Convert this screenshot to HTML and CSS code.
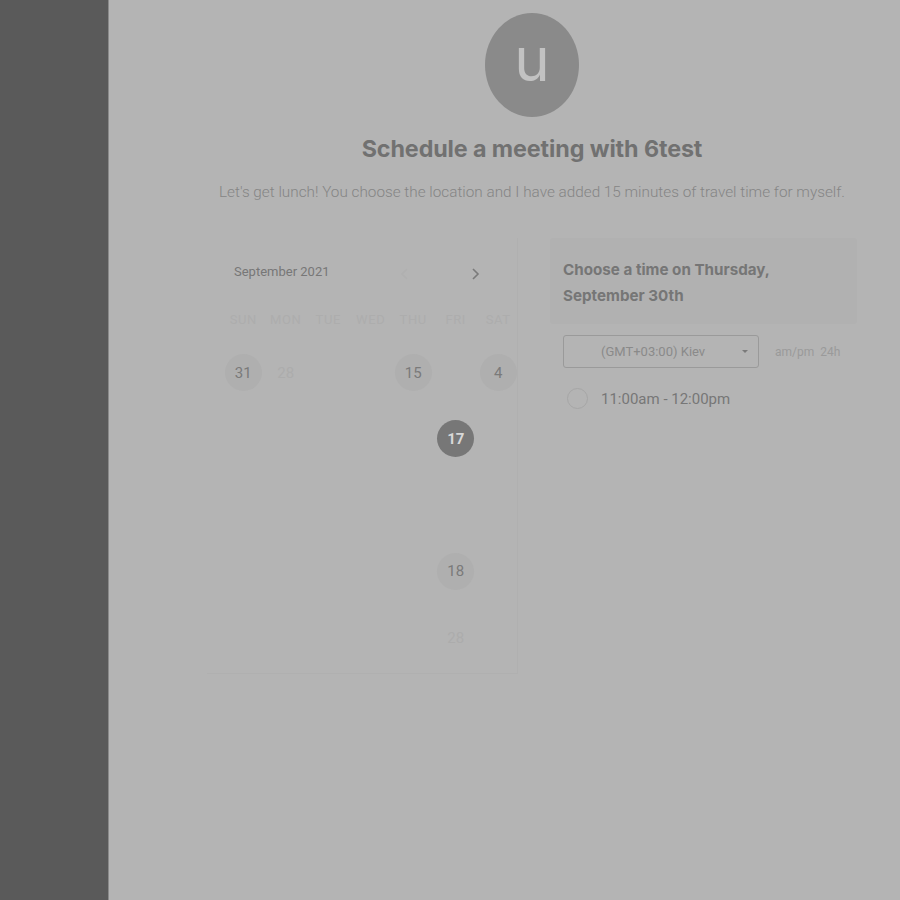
FILE: index.html
```html
<!DOCTYPE html>
<html>
<head>
<meta charset="utf-8">
<link rel="stylesheet" href="styles.css">
</head>
<body>
<div class="app">
  <aside class="sidebar"></aside>
  <main class="main">
    <div class="content">
      <div class="avatar"><span>u</span></div>
      <h1 class="title">Schedule a meeting with 6test</h1>
      <p class="desc">Let's get lunch! You choose the location and I have added 15 minutes of travel time for myself.</p>
      <div class="columns">
        <section class="calendar">
          <div class="cal-head">
            <span class="month">September 2021</span>
            <div class="nav">
              <svg class="arrow prev" width="10" height="14" viewBox="0 0 10 14"><path d="M7 2 L2 7 L7 12" fill="none" stroke="currentColor" stroke-width="1.6"/></svg>
              <svg class="arrow next" width="10" height="14" viewBox="0 0 10 14"><path d="M3 2 L8 7 L3 12" fill="none" stroke="currentColor" stroke-width="1.6"/></svg>
            </div>
          </div>
          <div class="weekdays">
            <span>SUN</span><span>MON</span><span>TUE</span><span>WED</span><span>THU</span><span>FRI</span><span>SAT</span>
          </div>
          <div class="grid">
            <span class="day avail">31</span><span class="day faint">28</span><span class="day"></span><span class="day"></span><span class="day avail">15</span><span class="day"></span><span class="day avail">4</span>
            <span class="day"></span><span class="day"></span><span class="day"></span><span class="day"></span><span class="day"></span><span class="day selected">17</span><span class="day"></span>
            <span class="day"></span><span class="day"></span><span class="day"></span><span class="day"></span><span class="day"></span><span class="day"></span><span class="day"></span>
            <span class="day"></span><span class="day"></span><span class="day"></span><span class="day"></span><span class="day"></span><span class="day avail">18</span><span class="day"></span>
            <span class="day"></span><span class="day"></span><span class="day"></span><span class="day"></span><span class="day"></span><span class="day faint">28</span><span class="day"></span>
          </div>
        </section>
        <section class="times">
          <div class="times-head">Choose a time on Thursday, September 30th</div>
          <div class="tz-row">
            <div class="select"><span>(GMT+03:00) Kiev</span><span class="caret"></span></div>
            <div class="fmt"><span>am/pm</span><span>24h</span></div>
          </div>
          <div class="slot"><span class="radio"></span><span>11:00am - 12:00pm</span></div>
        </section>
      </div>
    </div>
  </main>
</div>
</body>
</html>
```
FILE: styles.css
```css
html, body {
  margin: 0;
  padding: 0;
  height: 100%;
}
body {
  background: #b4b4b4;
  font-family: Roboto, "Liberation Sans", sans-serif;
}
.app {
  display: flex;
  height: 900px;
}
.sidebar {
  width: 108px;
  flex: none;
  background: #5a5a5a;
  border-right: 1px solid #8a8a8a;
}
.main {
  flex: 1;
  padding-left: 98px;
}
.content {
  width: 650px;
  display: flex;
  flex-direction: column;
  align-items: center;
  padding-top: 13px;
}
.avatar {
  width: 94px;
  height: 104px;
  border-radius: 50%;
  background: #8a8a8a;
  display: flex;
  align-items: center;
  justify-content: center;
}
.avatar span {
  color: #c2c2c2;
  font-family: Inter, Roboto, sans-serif;
  font-size: 60px;
  line-height: 1;
  margin-top: -12px;
}
.title {
  margin: 17px 0 0;
  font-family: Inter, "Liberation Sans", sans-serif;
  font-weight: 700;
  font-size: 23.3px;
  line-height: 30px;
  color: #717171;
  letter-spacing: -0.1px;
}
.desc {
  margin: 18px 0 0;
  font-size: 15.3px;
  line-height: 20px;
  font-weight: 300;
  color: #858585;
  white-space: nowrap;
}
.columns {
  align-self: stretch;
  display: flex;
  gap: 32px;
  margin-top: 36px;
}
.calendar {
  width: 311px;
  flex: none;
  box-sizing: border-box;
  padding: 0 0 0 15px;
  border-right: 1px solid #b0b0b0;
  border-bottom: 1px solid #b0b0b0;
  height: 436px;
}
.cal-head {
  display: flex;
  align-items: center;
  height: 66px;
  padding-left: 12px;
}
.month {
  font-size: 13px;
  color: #777;
  flex: 1;
}
.nav {
  display: flex;
  gap: 60px;
  align-items: center;
  margin-right: 37px;
  margin-top: 6px;
}
.arrow { color: #7a7a7a; }
.arrow.prev { color: #b0b0b0; }
.weekdays {
  display: grid;
  grid-template-columns: repeat(7, 42.5px);
  font-size: 13px;
  color: #adadad;
  letter-spacing: 0.6px;
  text-align: center;
  height: 30px;
  align-items: center;
}
.grid {
  display: grid;
  grid-template-columns: repeat(7, 42.5px);
  grid-auto-rows: 66.3px;
  align-items: start;
  justify-items: center;
  padding-top: 20px;
}
.day {
  width: 37px;
  height: 37px;
  border-radius: 50%;
  display: flex;
  align-items: center;
  justify-content: center;
  font-size: 15px;
  color: #7a7a7a;
}
.day.avail { background: #afafaf; }
.day.faint { color: #acacac; }
.day.selected {
  background: #777;
  color: #d8d8d8;
  font-weight: 700;
}
.times {
  flex: 1;
  display: flex;
  flex-direction: column;
}
.times-head {
  background: #b1b1b1;
  padding: 19px 80px 15px 13px;
  font-family: Inter, "Liberation Sans", sans-serif;
  font-weight: 700;
  font-size: 15.2px;
  line-height: 26px;
  color: #767676;
  border-radius: 3px;
}
.tz-row {
  display: flex;
  align-items: center;
  margin-top: 11px;
  padding-left: 13px;
}
.select {
  width: 196px;
  height: 33px;
  box-sizing: border-box;
  border: 1px solid #9a9a9a;
  border-radius: 3px;
  display: flex;
  align-items: center;
  padding-left: 37px;
  padding-right: 10px;
  font-size: 13px;
  color: #8a8a8a;
}
.select span:first-child { flex: 1; }
.caret {
  width: 0;
  height: 0;
  border-left: 3px solid transparent;
  border-right: 3px solid transparent;
  border-top: 3px solid #7a7a7a;
}
.fmt {
  margin-left: 16px;
  display: flex;
  gap: 6px;
  font-size: 12px;
  color: #9a9a9a;
}
.slot {
  display: flex;
  align-items: center;
  gap: 13px;
  padding-left: 17px;
  margin-top: 20px;
  font-size: 15px;
  color: #777;
}
.radio {
  width: 21px;
  height: 21px;
  box-sizing: border-box;
  border-radius: 50%;
  border: 1px solid #a6a6a6;
}
```
